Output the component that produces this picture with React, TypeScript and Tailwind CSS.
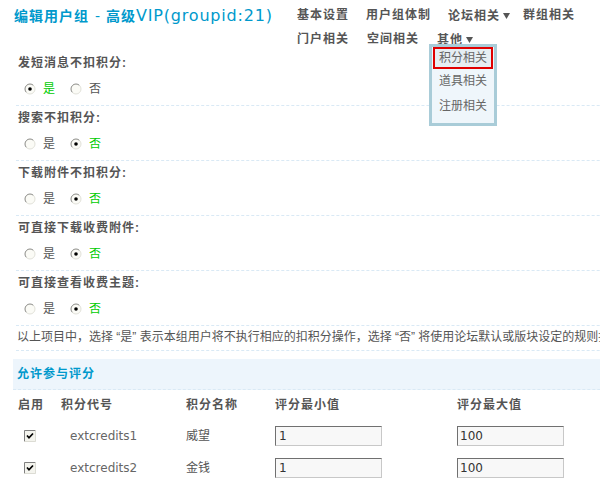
import React from "react";

const SECTIONS = [
  { label: "发短消息不扣积分:", yes: true },
  { label: "搜索不扣积分:", yes: false },
  { label: "下载附件不扣积分:", yes: false },
  { label: "可直接下载收费附件:", yes: false },
  { label: "可直接查看收费主题:", yes: false },
];

const CREDITS = [
  { code: "extcredits1", name: "威望", min: "1", max: "100" },
  { code: "extcredits2", name: "金钱", min: "1", max: "100" },
];

function Radio({ checked }: { checked: boolean }) {
  return (
    <svg width="12" height="12" viewBox="0 0 12 12" className="shrink-0">
      <circle cx="6" cy="6" r="5" fill="#fbfbf6" />
      <path d="M2.46 9.54 A5 5 0 0 1 9.54 2.46" stroke="#8a8a86" fill="none" />
      <path d="M9.54 2.46 A5 5 0 0 1 2.46 9.54" stroke="#e2e2da" fill="none" />
      {checked && <circle cx="6" cy="6" r="1.8" fill="#000" />}
    </svg>
  );
}

function Checkbox() {
  return (
    <svg width="12" height="12" viewBox="0 0 12 12" className="shrink-0">
      <rect x="0" y="0" width="12" height="12" fill="#f4f4ee" />
      <path d="M0.5 11.5 V0.5 H11.5" stroke="#808080" fill="none" />
      <path d="M11.5 0.5 V11.5 H0.5" stroke="#dcdcd4" fill="none" />
      <path d="M3 5.5 L5 7.8 L9 3.5" stroke="#000" strokeWidth="1.7" fill="none" />
    </svg>
  );
}

function Arrow() {
  return (
    <svg width="7" height="6" viewBox="0 0 7 6" className="ml-[3px] inline-block">
      <path d="M0 0 H7 L3.5 6 Z" fill="#555" />
    </svg>
  );
}

export default function App() {
  return (
    <div className="relative w-[600px] h-[482px] overflow-hidden bg-white font-['Liberation_Sans','Noto_Sans_CJK_SC',sans-serif] text-[12px] text-[#666]">
      {/* Header */}
      <div className="flex h-[51px]">
        <h3 className="w-[297px] shrink-0 pl-[14px] pt-[6px] text-[14px] leading-[20px] text-[#0099cc] whitespace-nowrap flex items-baseline">
          <span className="font-bold tracking-[1px]">编辑用户组</span>
          <span className="font-['DejaVu_Sans',sans-serif] px-[6px]">-</span>
          <span className="font-bold tracking-[1px]">高级</span>
          <span className="font-['DejaVu_Sans',sans-serif] text-[16px] tracking-[0.8px]">VIP(groupid:21)</span>
        </h3>
        <div className="flex flex-wrap w-[300px] pt-[5px] font-bold text-[#555] tracking-[1px] leading-[20px]">
          <span className="mr-[17px]">基本设置</span>
          <span className="mr-[17px]">用户组体制</span>
          <span className="mr-[13px] flex items-center">论坛相关<Arrow /></span>
          <span>群组相关</span>
          <span className="w-full h-0" />
          <span className="mr-[18px]">门户相关</span>
          <span className="mr-[18px]">空间相关</span>
          <span className="flex items-center">其他<Arrow /></span>
        </div>
      </div>

      {/* Dropdown menu */}
      <div className="absolute left-[429px] top-[44px] w-[68px] border-[3px] border-[#a9ccd8] bg-[#eff6fb] pb-[4px]">
        <div className="mx-[1px] h-[22px] border-2 border-[#e00000] bg-[#e6eef3] text-center leading-[18px] text-[#666]">
          积分相关
        </div>
        <div className="h-[25px] text-center leading-[25px] text-[#666]">道具相关</div>
        <div className="h-[25px] text-center leading-[25px] text-[#666]">注册相关</div>
      </div>

      {/* Form */}
      <div className="w-[900px] pl-[16px]">
        {SECTIONS.map((s) => (
          <div key={s.label} className="border-b border-dashed border-[#d9e9f5]">
            <div className="h-[24px] leading-[24px] pl-[2px] font-bold text-[#555] tracking-[1px]">
              {s.label}
            </div>
            <div className="mt-[2px] h-[24px] flex items-center pl-[8px]">
              <Radio checked={s.yes} />
              <span className={`ml-[7px] w-[27px] ${s.yes ? "text-[#00cc00]" : "text-[#555]"}`}>是</span>
              <Radio checked={!s.yes} />
              <span className={`ml-[7px] ${!s.yes ? "text-[#00cc00]" : "text-[#555]"}`}>否</span>
            </div>
            <div className="h-[4px]" />
          </div>
        ))}

        <div className="h-[25px] leading-[23px] pl-[1px] border-b border-dashed border-[#d9e9f5] whitespace-nowrap text-[#555]">
          以上项目中，选择 “是” 表示本组用户将不执行相应的扣积分操作，选择 “否” 将使用论坛默认或版块设定的规则扣除积分
        </div>

        <div className="mt-[8px] -ml-[3px] h-[31px] bg-[#edf5fc] pl-[4px] leading-[31px] font-bold text-[#0099cc] tracking-[1px] border-b border-dashed border-[#d9e9f5]">
          允许参与评分
        </div>

        {/* Credits table */}
        <div className="grid grid-cols-[45px_125px_89px_182px_200px] h-[30px] items-center font-bold text-[#555] tracking-[1px]">
          <span className="pl-[2px]">启用</span>
          <span>积分代号</span>
          <span>积分名称</span>
          <span>评分最小值</span>
          <span>评分最大值</span>
        </div>
        {CREDITS.map((c) => (
          <div
            key={c.code}
            className="grid grid-cols-[45px_125px_89px_182px_200px] h-[32px] items-center"
          >
            <span className="pl-[8px] flex">
              <Checkbox />
            </span>
            <span className="pl-[9px] font-['DejaVu_Sans',sans-serif] text-[12px] text-[#666]">
              {c.code}
            </span>
            <span className="text-[#555]">{c.name}</span>
            <span>
              <input
                readOnly
                value={c.min}
                className="block w-[107px] h-[20px] border border-t-[#707070] border-l-[#707070] border-b-[#c8c8c8] border-r-[#c8c8c8] bg-[#f8f8f8] px-[3px] font-['DejaVu_Sans',sans-serif] text-[12px] text-[#333] outline-none"
              />
            </span>
            <span>
              <input
                readOnly
                value={c.max}
                className="block w-[107px] h-[20px] border border-t-[#707070] border-l-[#707070] border-b-[#c8c8c8] border-r-[#c8c8c8] bg-[#f8f8f8] px-[2px] font-['DejaVu_Sans',sans-serif] text-[12px] text-[#333] outline-none"
              />
            </span>
          </div>
        ))}
      </div>
    </div>
  );
}
